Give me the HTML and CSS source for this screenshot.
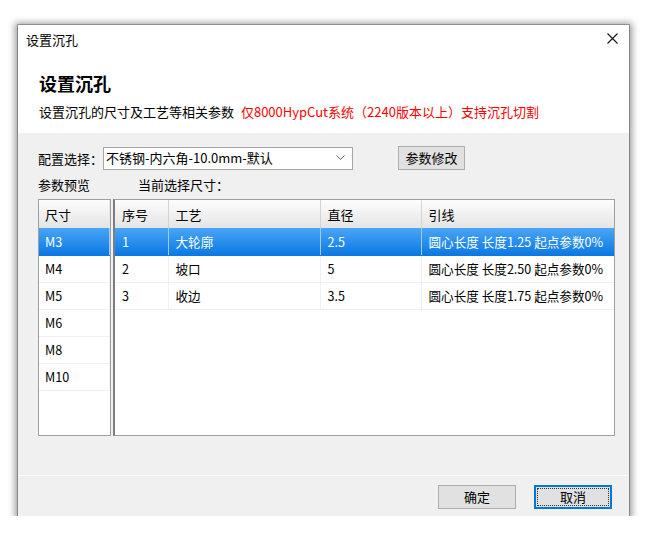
FILE: index.html
```html
<!DOCTYPE html>
<html lang="zh-CN">

<head>
    <meta charset="UTF-8" />
    <title>设置沉孔</title>
    <link rel="stylesheet" href="styles.css">
</head>

<body>
    <div class="dialog">
        <div class="titlebar">
            <span>设置沉孔</span>
            <svg class="close" width="11" height="11" viewBox="0 0 11 11">
                <path d="M0.5 0.5L10.5 10.5M10.5 0.5L0.5 10.5" stroke="#111" stroke-width="1.1" fill="none" />
            </svg>
        </div>

        <div class="header">
            <h1>设置沉孔</h1>
            <p>设置沉孔的尺寸及工艺等相关参数 <span class="warn">仅8000HypCut系统（2240版本以上）支持沉孔切割</span></p>
        </div>

        <div class="body">
            <div class="config-row">
                <span class="label">配置选择：</span>
                <div class="select">
                    <span>不锈钢-内六角-10.0mm-默认</span>
                    <svg width="9" height="6" viewBox="0 0 9 6">
                        <path d="M0.5 0.5L4.5 4.5L8.5 0.5" stroke="#666" fill="none" />
                    </svg>
                </div>
                <button class="btn edit-btn">参数修改</button>
            </div>

            <div class="caption-row">
                <span>参数预览</span>
                <span class="current">当前选择尺寸：</span>
            </div>

            <div class="panels">
                <div class="size-list">
                    <table>
                        <thead>
                            <tr><th>尺寸</th></tr>
                        </thead>
                        <tbody>
                            <tr class="selected"><td>M3</td></tr>
                            <tr><td>M4</td></tr>
                            <tr><td>M5</td></tr>
                            <tr><td>M6</td></tr>
                            <tr><td>M8</td></tr>
                            <tr><td>M10</td></tr>
                        </tbody>
                    </table>
                </div>

                <div class="detail">
                    <table>
                        <colgroup>
                            <col style="width: 53px">
                            <col style="width: 152px">
                            <col style="width: 101px">
                            <col>
                        </colgroup>
                        <thead>
                            <tr><th>序号</th><th>工艺</th><th>直径</th><th>引线</th></tr>
                        </thead>
                        <tbody>
                            <tr class="selected"><td>1</td><td>大轮廓</td><td>2.5</td><td>圆心长度 长度1.25 起点参数0%</td></tr>
                            <tr><td>2</td><td>坡口</td><td>5</td><td>圆心长度 长度2.50 起点参数0%</td></tr>
                            <tr><td>3</td><td>收边</td><td>3.5</td><td>圆心长度 长度1.75 起点参数0%</td></tr>
                        </tbody>
                    </table>
                </div>
            </div>
        </div>

        <div class="footer">
            <button class="btn">确定</button>
            <button class="btn focused">取消</button>
        </div>
    </div>
</body>

</html>
```

FILE: styles.css
```css
body {
    margin: 0;
    padding: 25px 0 0 18px;
    background: #fff;
    font-family: "Noto Sans CJK SC", "Liberation Sans", sans-serif;
    font-size: 13px;
    color: #000;
}

.dialog {
    width: 611px;
    height: 491px;
    background: #f0f0f0;
    display: flex;
    flex-direction: column;
    box-shadow: 0 0 0 1px rgba(0, 0, 0, 0.25), 0 1px 7px 3px rgba(0, 0, 0, 0.4);
}

.titlebar {
    height: 30px;
    background: #fff;
    display: flex;
    align-items: center;
    justify-content: space-between;
    padding: 0 11px 0 8px;
    line-height: 16px;
}

.close {
    display: block;
    margin-top: -3px;
}

.header {
    height: 78px;
    background: #fff;
    padding-left: 21px;
}

.header h1 {
    margin: 18px 0 0;
    font-size: 18px;
    line-height: 20px;
    font-weight: bold;
}

.header p {
    margin: 11px 0 0;
    line-height: 16px;
}

.warn {
    color: #ff0000;
    margin-left: 4px;
}

.body {
    flex: 1;
    padding: 13px 0 0 20px;
}

.config-row {
    display: flex;
    align-items: center;
    height: 24px;
}

.label {
    width: 65px;
}

.select {
    width: 250px;
    height: 23px;
    box-sizing: border-box;
    border: 1px solid #a5a5a5;
    background: #fff;
    display: flex;
    align-items: center;
    justify-content: space-between;
    padding: 0 7px 0 2px;
    line-height: 16px;
}

.btn {
    font-family: inherit;
    font-size: 13px;
    background: #e1e1e1;
    border: 1px solid #adadad;
    color: #000;
    padding: 0;
    height: 24px;
    line-height: 16px;
}

.edit-btn {
    margin-left: 45px;
    width: 67px;
}

.caption-row {
    margin-top: 7px;
    line-height: 16px;
}

.current {
    margin-left: 45px;
}

.panels {
    display: flex;
    margin-top: 6px;
    height: 237px;
}

.size-list {
    width: 73px;
    box-sizing: border-box;
    border: 1px solid #a0a0a0;
    background: #fff;
}

.detail {
    width: 502px;
    margin-left: 2px;
    box-sizing: border-box;
    border: 1px solid #a0a0a0;
    border-left: 2px solid #7e7e7e;
    background: #fff;
}

table {
    width: 100%;
    border-collapse: collapse;
    table-layout: fixed;
}

th,
td {
    text-align: left;
    font-weight: normal;
    padding: 0 0 0 7px;
    white-space: nowrap;
    overflow: hidden;
}

th {
    height: 28px;
    background: linear-gradient(#fdfdfd, #e4e4e4);
    border-right: 1px solid #d4d4d4;
    box-sizing: border-box;
}

td {
    height: 27px;
    box-sizing: border-box;
    font-size: 12.6px;
    border-bottom: 1px solid #f0f0f0;
    border-right: 1px solid #f0f0f0;
}

th:last-child,
td:last-child {
    border-right: none;
}

.size-list th,
.size-list td {
    padding-left: 6px;
    border-right: 1px solid #e6e6e6;
}

.size-list td {
    border-right-color: #f0f0f0;
}

.selected td {
    background: linear-gradient(#49a5f6, #0b79e3);
    color: #fff;
    border-bottom-color: #0b79e3;
    border-right-color: #9fcdf6;
}

.footer {
    height: 41px;
    box-sizing: border-box;
    border-top: 1px solid #fbfbfb;
    display: flex;
    justify-content: flex-end;
    gap: 18px;
    padding: 9px 17px 0 0;
}

.footer .btn {
    width: 78px;
}

.focused {
    border-color: #0078d7;
    box-shadow: inset 0 0 0 1px #0078d7;
    outline: 1px dotted #333;
    outline-offset: -4px;
}
```
